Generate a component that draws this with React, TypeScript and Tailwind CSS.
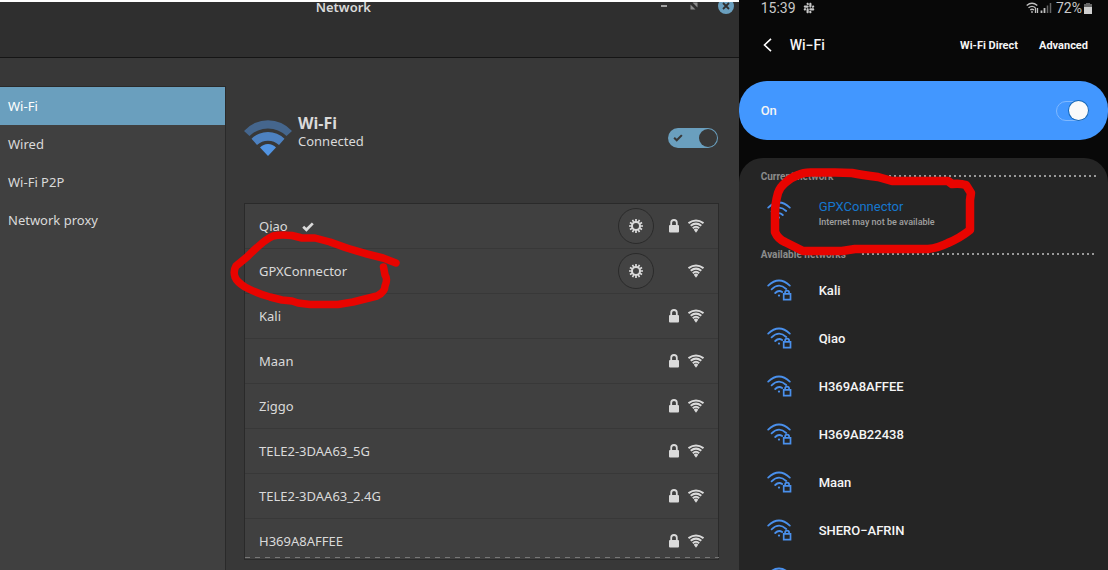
import React from "react";
import { FaSlack } from "react-icons/fa";

const sections = ["Wi-Fi", "Wired", "Wi-Fi P2P", "Network proxy"];

type Network = { name: string; connected?: boolean; saved?: boolean; secured?: boolean };

const desktopNetworks: Network[] = [
  { name: "Qiao", connected: true, saved: true, secured: true },
  { name: "GPXConnector", saved: true },
  { name: "Kali", secured: true },
  { name: "Maan", secured: true },
  { name: "Ziggo", secured: true },
  { name: "TELE2-3DAA63_5G", secured: true },
  { name: "TELE2-3DAA63_2.4G", secured: true },
  { name: "H369A8AFFEE", secured: true },
];

const phoneNetworks = ["Kali", "Qiao", "H369A8AFFEE", "H369AB22438", "Maan", "SHERO−AFRIN", ""];

function LargeWifi() {
  return (
    <svg width="48" height="36" viewBox="0 0 48 36" fill="#5294e2" aria-hidden="true">
      <path opacity=".5" d="M0 11A32 32 0 0 1 48 11L42.5 16A26.6 26.6 0 0 0 5.5 16Z" />
      <path opacity=".8" d="M7.5 18.7A23.7 23.7 0 0 1 40.5 18.7L35 25A16.2 16.2 0 0 0 13 25Z" />
      <path d="M16 27.5A10.9 10.9 0 0 1 32 27.5L24 36Z" />
    </svg>
  );
}

function SignalIcon() {
  return (
    <svg width="16" height="14" viewBox="0 0 16 14" fill="none" stroke="#dadada" strokeWidth="2" aria-hidden="true">
      <path d="M.5 4.1Q8-1.200 15.500 4.100M2.700 6.700Q8 2.500 13.300 6.700M4.800 9.200Q8 6.300 11.200 9.200" />
      <path d="M8 9.400A2.800 2.800 0 0 1 10.200 10.700L8 13.800L5.800 10.700A2.800 2.800 0 0 1 8 9.400Z" fill="#dadada" stroke="none" />
    </svg>
  );
}

function LockIcon() {
  return (
    <svg width="10" height="14" viewBox="0 0 10 14" aria-hidden="true">
      <path d="M2.200 7V3.800a2.800 2.800 0 0 1 5.600 0V7" fill="none" stroke="#dadada" strokeWidth="1.800" />
      <rect y="6" width="10" height="7.5" rx="1" fill="#dadada" />
    </svg>
  );
}

function GearIcon() {
  return (
    <svg width="14" height="14" viewBox="0 0 14 14" fill="none" stroke="#dadada" aria-hidden="true">
      <circle cx="7" cy="7" r="4" strokeWidth="2" />
      <path
        strokeWidth="1.7"
        d="M7 0v3M7 11v3M0 7h3M11 7h3M3.500 .95l1.500 2.600M9 10.450l1.500 2.600M.95 3.500l2.600 1.500M10.450 9l2.600 1.500M10.500 .95l-1.500 2.600M5 10.450l-1.500 2.600M13.050 3.500l-2.600 1.500M3.550 9l-2.600 1.500"
      />
    </svg>
  );
}

function CheckIcon({ color }: { color: string }) {
  return (
    <svg width="12" height="10" viewBox="0 0 12 10" fill="none" stroke={color} strokeWidth="2.7" aria-hidden="true">
      <path d="M1.2 4.8L4.4 7.8L10.8 1.4" />
    </svg>
  );
}

function PhoneWifi({ locked = true }: { locked?: boolean }) {
  return (
    <svg width="25" height="22" viewBox="0 0 25 22" fill="none" stroke="#4a90ec" strokeWidth="1.8" strokeLinecap="round" aria-hidden="true">
      <path d="M1.2 6.6Q12-3.6 22.8 6.6M4.6 10.3Q12 3.2 19.2 10" />
      <path d={locked ? "M8.2 14Q11.6 10.6 15.2 13" : "M8.2 14Q12 10.2 15.8 14"} />
      <circle cx="12" cy="16.6" r="1.1" fill="#4a90ec" stroke="none" />
      {locked && <path d="M16.700 14.900h6.800v5.800h-6.800ZM18.100 15v-1.400a2 2 0 0 1 4 0V15" strokeWidth="1.700" />}
    </svg>
  );
}

function DesktopWindow() {
  return (
    <section className="relative flex min-w-0 flex-col overflow-hidden border-t-2 border-white bg-[#383838] font-['Noto_Sans',sans-serif] text-[13px] text-[#dadada]">
      <header className="grid h-14 shrink-0 grid-cols-[1fr_auto_1fr] items-start border-b border-[#151515] bg-[#2f2f2f]">
        <span />
        <h1 className="-mt-1 mr-13 leading-[18px] font-semibold">Network</h1>
        <div className="-mt-1 flex items-center justify-end gap-5 pr-[5px]">
          <button aria-label="Minimize" className="flex h-4 w-3 items-center justify-center">
            <span className="h-[2px] w-[6px] bg-[#a0a0a0]" />
          </button>
          <button aria-label="Restore" className="flex h-4 w-2 items-center justify-center">
            <svg width="8" height="8" viewBox="0 0 8 8" fill="#8b8b8b"><path d="M2.500 .5h5v5ZM.5 2.500v5h5Z" /></svg>
          </button>
          <button aria-label="Close" className="flex size-4 shrink-0 items-center justify-center rounded-full bg-[#6a9fbe]">
            <svg width="8" height="8" viewBox="0 0 8 8" stroke="#2f2f2f" strokeWidth="1.8"><path d="M1 1l6 6M7 1L1 7" /></svg>
          </button>
        </div>
      </header>

      <div className="flex min-h-0 flex-1">
        <nav className="mt-7 w-[226px] shrink-0 border-t border-r border-[#2a2a2a] bg-[#404040]">
          {sections.map((name, i) => (
            <a key={name} href="#" className={i === 0 ? "flex h-[38px] items-center bg-[#6a9fbe] px-2 pt-[2px] text-white" : "flex h-[38px] items-center px-2 pt-[2px]"}>
              {name}
            </a>
          ))}
        </nav>

        <main className="flex min-w-0 flex-1 flex-col pt-[55px] pr-5 pb-[10px] pl-[18px]">
          <div className="flex h-[90px] shrink-0 items-start">
            <div className="pt-[7px]"><LargeWifi /></div>
            <div className="pl-[6px]">
              <h2 className="text-base leading-5 font-bold">Wi-Fi</h2>
              <p className="leading-4">Connected</p>
            </div>
            <label className="relative mt-[15px] mr-px ml-auto flex h-5 w-[50px] items-center rounded-full bg-[#6a9fbe] px-1">
              <input type="checkbox" defaultChecked aria-label="Wi-Fi" className="absolute inset-0 size-full cursor-pointer appearance-none" />
              <svg width="10" height="8" viewBox="0 0 12 10" className="ml-px" fill="none" stroke="#383838" strokeWidth="2.6" aria-hidden="true">
                <path d="M1.2 4.8L4.4 7.8L10.8 1.4" />
              </svg>
              <span className="-mr-[3px] ml-auto size-[18px] rounded-full bg-[#383838]" />
            </label>
          </div>

          <ul className="min-h-0 flex-1 overflow-hidden border border-[#2a2a2a] bg-[#404040]">
            {desktopNetworks.map((n) => (
              <li key={n.name} className="flex h-[45px] items-center border-b border-[#383838] px-[14px]">
                <button className="flex h-full min-w-0 flex-1 items-center gap-[14px] pt-[2px] text-left">
                  {n.name}
                  {n.connected && <CheckIcon color="#dadada" />}
                </button>
                {n.saved && (
                  <button aria-label={`${n.name} settings`} className="mr-[15px] flex size-9 items-center justify-center rounded-full border border-[#2a2a2a] bg-[#434343]">
                    <GearIcon />
                  </button>
                )}
                <span className="mr-[9px] w-[10px]">{n.secured && <LockIcon />}</span>
                <SignalIcon />
              </li>
            ))}
          </ul>
          <svg className="-mt-[3px] h-[3px] w-full shrink-0" aria-hidden="true">
            <path d="M1 .5H2000" stroke="#777" strokeDasharray="5 5" />
          </svg>
        </main>
      </div>

      <svg className="pointer-events-none absolute top-[228px] left-[228px]" width="176" height="84" viewBox="228 230 176 84" fill="none" stroke="#e80400" strokeWidth="7.5" strokeLinecap="round" strokeLinejoin="round" aria-hidden="true">
        <path d="M396 263L383 258L367 254Q348 249 330 242L315 238H302L292 235.500Q280 234.500 273 236Q265 239 247 257L236 266Q233 271 235 277Q237 282 245 287Q256 293 270 297L282 300L292 301L298 303L310 304.500H338L353 302L377 296Q385 292 385 286Q388 279 385 275L383.500 267" />
      </svg>
    </section>
  );
}

function SectionLabel({ children }: { children: React.ReactNode }) {
  return (
    <div className="flex h-5 items-center gap-4 pr-3 text-[10px] font-bold text-[#8c8c8c]">
      <h3>{children}</h3>
      <svg className="h-[2px] flex-1" aria-hidden="true">
        <path d="M0 1H2000" stroke="#999" strokeWidth="2" strokeDasharray="2 3" />
      </svg>
    </div>
  );
}

function Phone() {
  return (
    <section className="relative flex min-w-0 flex-col overflow-hidden bg-[#080808] font-[Roboto,sans-serif] text-[13px] text-[#f5f5f5]">
      <div className="flex h-4 shrink-0 items-center pr-4 pl-[22px] text-sm text-[#c8c8c8]">
        <span>15:39</span>
        <FaSlack className="ml-[7px] size-3" aria-hidden="true" />
        <svg className="ml-auto" width="26" height="12" viewBox="0 0 26 12" fill="none" stroke="#c0c0c0" strokeWidth="1.300" aria-hidden="true">
          <path d="M.7 3.500Q6-1 11.300 3.500M2.500 5.800Q6 2.800 9.500 5.800M4.300 8Q6 6.500 8 8" />
          <path d="M6 9v2M9.500 6v5M11.500 6v5" />
          <path d="M15.500 8.500v2.500M18.500 6v5" strokeWidth="1.800" />
          <path d="M21.500 3.500v7.500M24.500 1v10" stroke="#666" strokeWidth="1.500" />
        </svg>
        <span className="ml-1">72%</span>
        <svg className="ml-[2px]" width="8" height="11" viewBox="0 0 8 11" aria-hidden="true">
          <path d="M2 0h4v1h2v3H0V1h2Z" fill="#666" /><path d="M0 4h8v7H0Z" fill="#d0d0d0" />
        </svg>
      </div>

      <header className="flex h-[58px] shrink-0 items-center pr-5 pl-6 text-[11px] font-bold">
        <button aria-label="Back">
          <svg width="9" height="14" viewBox="0 0 9 14" fill="none" stroke="#fff" strokeWidth="1.600" aria-hidden="true"><path d="M8 .8L1.500 7L8 13.200" /></svg>
        </button>
        <h2 className="ml-[18px] text-sm font-medium">Wi−Fi</h2>
        <button className="ml-auto pt-[2px]">Wi-Fi Direct</button>
        <button className="ml-[21px] pt-[2px]">Advanced</button>
      </header>

      <div className="mt-[7px] flex h-[59px] shrink-0 items-center justify-between rounded-[28px] bg-[#4297ff] pr-[19px] pl-[22px] font-medium">
        <label htmlFor="phone-wifi">On</label>
        <span className="relative flex h-5 w-[33px] items-center justify-end rounded-full border border-[#80b9ff]">
          <input id="phone-wifi" type="checkbox" defaultChecked className="absolute inset-0 size-full cursor-pointer appearance-none" />
          <span className="size-[19px] shrink-0 rounded-full bg-[#fafafa] ring-1 ring-[#1668b8]" />
        </span>
      </div>

      <div className="mt-[18px] min-h-0 flex-1 overflow-hidden rounded-t-[24px] bg-[#252525] pt-2 pl-[22px]">
        <SectionLabel>Current network</SectionLabel>
        <button className="flex h-[58px] w-full items-start pt-3 pl-[6px] text-left">
          <span className="pt-[3px]"><PhoneWifi locked={false} /></span>
          <span className="flex flex-col pl-[27px]">
            <span className="leading-[17px] text-[#1677cd]">GPXConnector</span>
            <span className="text-[9px] leading-[14px] font-medium text-[#a0a0a0]">Internet may not be available</span>
          </span>
        </button>
        <SectionLabel>Available networks</SectionLabel>
        <ul className="pt-[2px]">
          {phoneNetworks.map((name, i) => (
            <li key={i}>
              <button className="flex h-12 w-full items-center gap-[27px] pl-[6px] text-left font-medium">
                <PhoneWifi />
                <span className="pt-[2px]">{name}</span>
              </button>
            </li>
          ))}
        </ul>
      </div>

      <svg className="pointer-events-none absolute top-[166px] left-[31px]" width="210" height="92" viewBox="770 166 210 92" fill="none" stroke="#e80400" strokeWidth="8.500" strokeLinecap="round" strokeLinejoin="round" aria-hidden="true">
        <path d="M948 181H892L878 177Q862 175 852 173L835 172.500H813Q804 172 798 175Q790 178 785 183Q780 187 778 193Q775 204 775 213V232Q778 239 785 242L803 251H842L855 249H928Q938 248 948 243Q960 238 970 230V200L971 193L966 185Q960 183 952 184L948 181" />
      </svg>
    </section>
  );
}

export default function App() {
  return (
    <div className="grid h-screen grid-cols-[2fr_1fr] overflow-hidden bg-[#383838]">
      <DesktopWindow />
      <Phone />
    </div>
  );
}
